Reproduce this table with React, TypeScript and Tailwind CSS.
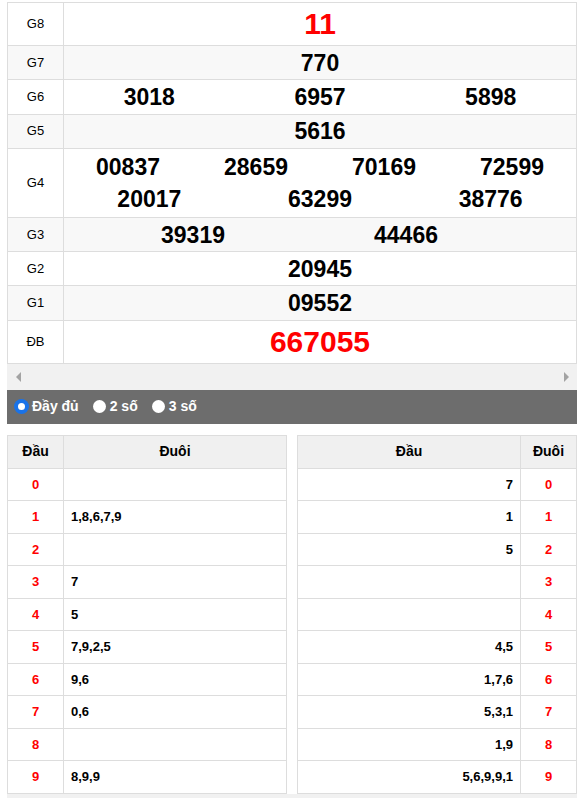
const PRIZES: { label: string; rows: string[][]; red?: boolean; big?: boolean }[] = [
  { label: 'G8', rows: [['11']], red: true, big: true },
  { label: 'G7', rows: [['770']] },
  { label: 'G6', rows: [['3018', '6957', '5898']] },
  { label: 'G5', rows: [['5616']] },
  { label: 'G4', rows: [['00837', '28659', '70169', '72599'], ['20017', '63299', '38776']] },
  { label: 'G3', rows: [['39319', '44466']] },
  { label: 'G2', rows: [['20945']] },
  { label: 'G1', rows: [['09552']] },
  { label: 'ĐB', rows: [['667055']], red: true, big: true },
]

const ROW_H: Record<string, string> = {
  G8: 'h-[43px]',
  G4: 'h-[69px]',
  ĐB: 'h-[43px]',
}

const DAU = ['', '1,8,6,7,9', '', '7', '5', '7,9,2,5', '9,6', '0,6', '', '8,9,9']
const DUOI = ['7', '1', '5', '', '', '4,5', '1,7,6', '5,3,1', '1,9', '5,6,9,9,1']

function NumberLine({ nums, red, big }: { nums: string[]; red?: boolean; big?: boolean }) {
  const color = red ? 'text-[#ff0000]' : 'text-black'
  const size = big ? 'text-[30px]' : 'text-[23px]'
  if (nums.length === 2) {
    return (
      <div className={`flex ${size} ${color} font-bold leading-[32px]`}>
        <span className="w-[258px] text-center">{nums[0]}</span>
        <span className="w-[168px] text-center">{nums[1]}</span>
      </div>
    )
  }
  return (
    <div className={`flex ${size} ${color} font-bold leading-[32px]`}>
      {nums.map(n => (
        <span key={n} className="flex-1 text-center">
          {n}
        </span>
      ))}
    </div>
  )
}

function Radio({ checked, label }: { checked?: boolean; label: string }) {
  return (
    <label className="flex items-center gap-[4px] text-white text-[14px] font-bold">
      <span
        className={
          checked
            ? 'w-[13px] h-[13px] rounded-full bg-white border-[3px] border-[#1a73e8] ring-1 ring-[#1a73e8]'
            : 'w-[13px] h-[13px] rounded-full bg-white'
        }
      />
      {label}
    </label>
  )
}

export default function App() {
  return (
    <div
      className="bg-white w-[577px] h-[798px] overflow-hidden pt-[2px]"
      style={{ fontFamily: '"Liberation Sans", Arial, sans-serif' }}
    >
      <div className="ml-[7px] w-[570px]">
        <table className="w-full border-collapse">
          <tbody>
            {PRIZES.map((p, i) => (
              <tr key={p.label} className={`${ROW_H[p.label] ?? 'h-[34.3px]'} ${i % 2 === 1 ? 'bg-[#f8f8f8]' : 'bg-white'}`}>
                <td className="w-[56px] border border-[#dddddd] text-center text-[13px] text-black p-0">
                  {p.label}
                </td>
                <td className="border border-[#dddddd] p-0">
                  {p.rows.map((r, k) => (
                    <NumberLine key={k} nums={r} red={p.red} big={p.big} />
                  ))}
                </td>
              </tr>
            ))}
          </tbody>
        </table>

        {/* scrollbar */}
        <div className="h-[26px] bg-[#f1f1f1] flex items-center justify-between px-[6px]">
          <span className="w-0 h-0 border-y-[5px] border-y-transparent border-r-[5px] border-r-[#a3a3a3] ml-[3px]" />
          <span className="w-0 h-0 border-y-[5px] border-y-transparent border-l-[5px] border-l-[#a3a3a3] mr-[2px]" />
        </div>

        <div className="h-[34px] bg-[#6d6d6d] flex items-center gap-[14px] pl-[8px]">
          <Radio checked label="Đầy đủ" />
          <Radio label="2 số" />
          <Radio label="3 số" />
        </div>

        <div className="flex justify-between mt-[11px]">
          <table className="w-[280px] border-collapse text-[13px] font-bold">
            <thead>
              <tr className="h-[33px] bg-[#f0f0f0]">
                <th className="w-[56px] border border-[#dddddd] text-[14px]">Đầu</th>
                <th className="border border-[#dddddd] text-[14px]">Đuôi</th>
              </tr>
            </thead>
            <tbody>
              {DAU.map((v, i) => (
                <tr key={i} className="h-[32.5px]">
                  <td className="border border-[#dddddd] text-center text-[#ff0000]">{i}</td>
                  <td className="border border-[#dddddd] pl-[7px] text-black">{v}</td>
                </tr>
              ))}
            </tbody>
          </table>

          <table className="w-[280px] border-collapse text-[13px] font-bold">
            <thead>
              <tr className="h-[33px] bg-[#f0f0f0]">
                <th className="border border-[#dddddd] text-[14px]">Đầu</th>
                <th className="w-[56px] border border-[#dddddd] text-[14px]">Đuôi</th>
              </tr>
            </thead>
            <tbody>
              {DUOI.map((v, i) => (
                <tr key={i} className="h-[32.5px]">
                  <td className="border border-[#dddddd] text-right pr-[7px] text-black">{v}</td>
                  <td className="border border-[#dddddd] text-center text-[#ff0000]">{i}</td>
                </tr>
              ))}
            </tbody>
          </table>
        </div>
        <div className="h-[6px] bg-[#f1f1f1]" />
      </div>
    </div>
  )
}
